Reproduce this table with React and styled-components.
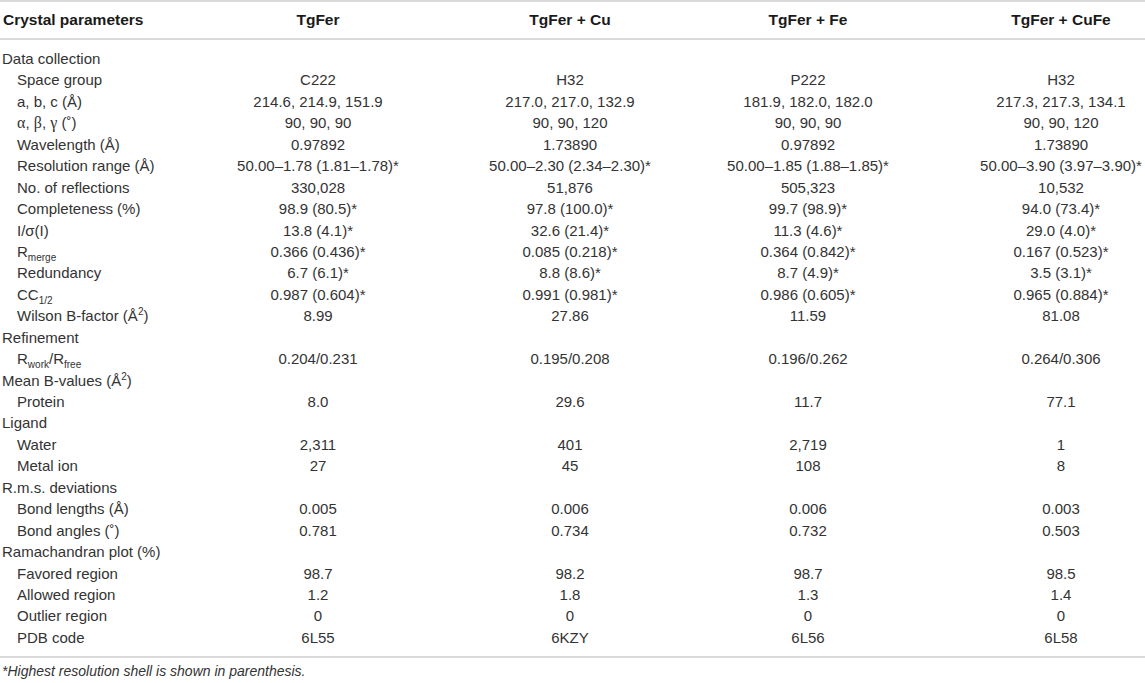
import styled, { createGlobalStyle } from "styled-components";

const GlobalStyle = createGlobalStyle`
  html, body {
    margin: 0;
    padding: 0;
    background: #ffffff;
  }
  body {
    font-family: "Liberation Sans", Arial, Helvetica, sans-serif;
    color: #333333;
  }
`;

// width, padding-left per column
const columns = [
  { w: 195, pl: 0 },
  { w: 246, pl: 0 },
  { w: 258, pl: 0 },
  { w: 218, pl: 0 },
  { w: 228, pl: 60 },
];

const heads = ["TgFer", "TgFer + Cu", "TgFer + Fe", "TgFer + CuFe"];

const Greek = () => (
  <>
    <SC.Serif>α</SC.Serif>, <SC.Serif>β</SC.Serif>, <SC.Serif>γ</SC.Serif> (˚)
  </>
);

const A2 = () => (
  <>
    Å<sup>2</sup>
  </>
);

const rows = [
  { label: "Data collection", section: true },
  { label: "Space group", v: ["C222", "H32", "P222", "H32"] },
  {
    label: "a, b, c (Å)",
    v: ["214.6, 214.9, 151.9", "217.0, 217.0, 132.9", "181.9, 182.0, 182.0", "217.3, 217.3, 134.1"],
  },
  { label: <Greek />, v: ["90, 90, 90", "90, 90, 120", "90, 90, 90", "90, 90, 120"] },
  { label: "Wavelength (Å)", v: ["0.97892", "1.73890", "0.97892", "1.73890"] },
  {
    label: "Resolution range (Å)",
    v: [
      "50.00–1.78 (1.81–1.78)*",
      "50.00–2.30 (2.34–2.30)*",
      "50.00–1.85 (1.88–1.85)*",
      "50.00–3.90 (3.97–3.90)*",
    ],
  },
  { label: "No. of reflections", v: ["330,028", "51,876", "505,323", "10,532"] },
  {
    label: "Completeness (%)",
    v: ["98.9 (80.5)*", "97.8 (100.0)*", "99.7 (98.9)*", "94.0 (73.4)*"],
  },
  { label: "I/σ(I)", v: ["13.8 (4.1)*", "32.6 (21.4)*", "11.3 (4.6)*", "29.0 (4.0)*"] },
  {
    label: (
      <>
        R<sub>merge</sub>
      </>
    ),
    v: ["0.366 (0.436)*", "0.085 (0.218)*", "0.364 (0.842)*", "0.167 (0.523)*"],
  },
  { label: "Redundancy", v: ["6.7 (6.1)*", "8.8 (8.6)*", "8.7 (4.9)*", "3.5 (3.1)*"] },
  {
    label: (
      <>
        CC<sub>1/2</sub>
      </>
    ),
    v: ["0.987 (0.604)*", "0.991 (0.981)*", "0.986 (0.605)*", "0.965 (0.884)*"],
  },
  {
    label: (
      <>
        Wilson B-factor (<A2 />)
      </>
    ),
    v: ["8.99", "27.86", "11.59", "81.08"],
  },
  { label: "Refinement", section: true },
  {
    label: (
      <>
        R<sub>work</sub>/R<sub>free</sub>
      </>
    ),
    v: ["0.204/0.231", "0.195/0.208", "0.196/0.262", "0.264/0.306"],
  },
  {
    label: (
      <>
        Mean B-values (<A2 />)
      </>
    ),
    section: true,
  },
  { label: "Protein", v: ["8.0", "29.6", "11.7", "77.1"] },
  { label: "Ligand", section: true },
  { label: "Water", v: ["2,311", "401", "2,719", "1"] },
  { label: "Metal ion", v: ["27", "45", "108", "8"] },
  { label: "R.m.s. deviations", section: true },
  { label: "Bond lengths (Å)", v: ["0.005", "0.006", "0.006", "0.003"] },
  { label: "Bond angles (˚)", v: ["0.781", "0.734", "0.732", "0.503"] },
  { label: "Ramachandran plot (%)", section: true },
  { label: "Favored region", v: ["98.7", "98.2", "98.7", "98.5"] },
  { label: "Allowed region", v: ["1.2", "1.8", "1.3", "1.4"] },
  { label: "Outlier region", v: ["0", "0", "0", "0"] },
  { label: "PDB code", v: ["6L55", "6KZY", "6L56", "6L58"] },
];

export default function App() {
  return (
    <SC.Page>
      <GlobalStyle />
      <SC.Table>
        <SC.Head>
          <SC.HeadLabel>Crystal parameters</SC.HeadLabel>
          {heads.map((h, i) => (
            <SC.HeadCell key={h} $pl={columns[i + 1].pl}>
              {h}
            </SC.HeadCell>
          ))}
        </SC.Head>
        <SC.Body>
          {rows.map((r, idx) => (
            <SC.Row key={idx}>
              <SC.Label $indent={!r.section}>{r.label}</SC.Label>
              {(r.v || ["", "", "", ""]).map((val, i) => (
                <SC.Cell key={i} $pl={columns[i + 1].pl}>
                  {val}
                </SC.Cell>
              ))}
            </SC.Row>
          ))}
        </SC.Body>
      </SC.Table>
      <SC.Note>*Highest resolution shell is shown in parenthesis.</SC.Note>
    </SC.Page>
  );
}

const grid = columns.map((c) => `${c.w}px`).join(" ");

const SC = {
  Page: styled.div`
    width: 1145px;
    font-size: 15px;
  `,
  Table: styled.div`
    border-top: 2px solid #d9d9d9;
    border-bottom: 2px solid #d9d9d9;
  `,
  Head: styled.div`
    display: grid;
    grid-template-columns: ${grid};
    align-items: center;
    height: 36px;
    border-bottom: 2px solid #d9d9d9;
    font-weight: bold;
    font-size: 15.5px;
    color: #1a1a1a;
  `,
  HeadLabel: styled.div`
    padding-left: 3px;
    white-space: nowrap;
  `,
  HeadCell: styled.div`
    text-align: center;
    white-space: nowrap;
    padding-left: ${(p) => p.$pl}px;
  `,
  Body: styled.div`
    padding: 8px 0 8px;
  `,
  Row: styled.div`
    display: grid;
    grid-template-columns: ${grid};
    height: 21.45px;
    line-height: 21.45px;
    align-items: center;

    sub,
    sup {
      font-size: 10px;
      line-height: 0;
    }
  `,
  Label: styled.div`
    padding-left: ${(p) => (p.$indent ? 17 : 2)}px;
    white-space: nowrap;
  `,
  Cell: styled.div`
    text-align: center;
    white-space: nowrap;
    padding-left: ${(p) => p.$pl}px;
  `,
  Serif: styled.span`
    font-family: "Liberation Serif", "Times New Roman", serif;
    font-size: 16px;
  `,
  Note: styled.div`
    padding: 3px 0 0 2px;
    font-style: italic;
    font-size: 14px;
    line-height: 20px;
  `,
};
